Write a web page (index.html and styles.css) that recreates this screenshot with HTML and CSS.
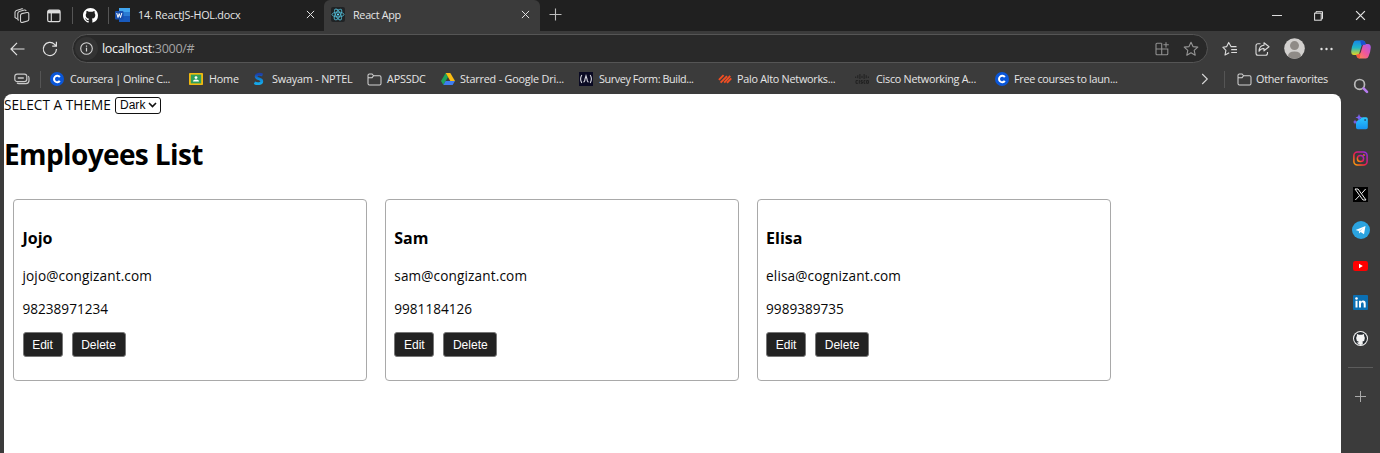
FILE: index.html
```html
<!DOCTYPE html>
<html lang="en">
<head>
<meta charset="utf-8">
<title>React App</title>
<link rel="stylesheet" href="styles.css">
</head>
<body>
<svg class="defs" width="0" height="0" aria-hidden="true">
  <defs>
    <linearGradient id="g-insta" x1="0" y1="1" x2="1" y2="0"><stop offset="0" stop-color="#ffb000"/><stop offset=".45" stop-color="#f5174c"/><stop offset="1" stop-color="#8a2cf0"/></linearGradient>
    <linearGradient id="g-cop1" x1="0" y1="0" x2="0" y2="1"><stop offset="0" stop-color="#1685e8"/><stop offset=".5" stop-color="#22b6c6"/><stop offset="1" stop-color="#e5d51c"/></linearGradient>
    <linearGradient id="g-cop2" x1="1" y1="0" x2="0" y2="1"><stop offset="0" stop-color="#a05cf5"/><stop offset=".5" stop-color="#f0569c"/><stop offset="1" stop-color="#ff9440"/></linearGradient>
    <linearGradient id="g-s" x1="0" y1="0" x2="0" y2="1"><stop offset="0" stop-color="#1e3fa8"/><stop offset=".5" stop-color="#0d86d8"/><stop offset="1" stop-color="#16a8e8"/></linearGradient>
    <linearGradient id="g-bag" x1="0" y1="0" x2="0" y2="1"><stop offset="0" stop-color="#2cc8ff"/><stop offset="1" stop-color="#1693f0"/></linearGradient>
    <symbol id="github" viewBox="0 0 16 16"><path d="M8 0C3.58 0 0 3.58 0 8c0 3.54 2.29 6.53 5.47 7.59.4.07.55-.17.55-.38 0-.19-.01-.82-.01-1.49-2.01.37-2.53-.49-2.69-.94-.09-.23-.48-.94-.82-1.13-.28-.15-.68-.52-.01-.53.63-.01 1.08.58 1.23.82.72 1.21 1.87.87 2.33.66.07-.52.28-.87.51-1.07-1.78-.2-3.64-.89-3.64-3.95 0-.87.31-1.59.82-2.15-.08-.2-.36-1.02.08-2.12 0 0 .67-.21 2.2.82A7.7 7.7 0 0 1 8 3.87c.68 0 1.36.09 2 .26 1.53-1.04 2.2-.82 2.2-.82.44 1.1.16 1.92.08 2.12.51.56.82 1.27.82 2.15 0 3.07-1.87 3.75-3.65 3.95.29.25.54.73.54 1.48 0 1.07-.01 1.93-.01 2.2 0 .21.15.46.55.38A8 8 0 0 0 16 8c0-4.42-3.58-8-8-8z"/></symbol>
    <symbol id="folder" viewBox="0 0 16 14"><path d="M1 11.2V2.5Q1 1 2.5 1H5.4L7 3H13.5Q15 3 15 4.5V11.3Q15 12.8 13.5 12.8H2.5Q1 12.8 1 11.2zM1 5H5.4L7 3" fill="none" stroke="#d4d4d4" stroke-width="1.1"/></symbol>
    <symbol id="coursera" viewBox="0 0 14 14"><circle cx="7" cy="7" r="7" fill="#0a56d8"/><path d="M9.8 5.1A3.2 3.2 0 1 0 9.8 8.9" fill="none" stroke="#fff" stroke-width="2"/></symbol>
    <symbol id="star" viewBox="0 0 16 16"><path d="M8 1.2L10 5.6 14.8 6.1 11.2 9.3 12.2 14.2 8 11.7 3.8 14.2 4.8 9.3 1.2 6.1 6 5.6z" fill="none" stroke="currentColor" stroke-width="1.1" stroke-linejoin="round"/></symbol>
    <symbol id="close" viewBox="0 0 10 10"><path d="M1 1L9 9M9 1L1 9" stroke="#e4e4e4" stroke-width="1.1"/></symbol>
  </defs>
</svg>

<header class="tabstrip">
  <svg class="ic" width="16" height="16" viewBox="0 0 16 16" fill="none" stroke="#d0d0d0" stroke-width="1.1" stroke-linejoin="round"><path d="M7.8 5.6L12.9 4.5Q14.8 4.2 14.8 6V11.2Q14.8 12.6 13.5 13L8.6 14.4Q6.6 14.8 6.5 13V7.6Q6.5 6 7.8 5.6z"/><path d="M4.9 12.2L3.8 11.7V5.4Q4 3.9 5.3 3.5L10.4 2Q11.6 1.8 12.2 3M2.9 10.7L1 9.6V4.4Q1.1 3 2.4 2.5L7.4.9Q8.4.7 9 1"/></svg>
  <svg class="ic" width="14" height="14" viewBox="0 0 14 14"><rect x=".7" y="1.2" width="12.4" height="11.4" rx="1.6" fill="none" stroke="#dedede" stroke-width="1.2"/><path d="M1 1.2H13V4.4H1z" fill="#dedede"/><path d="M4.3 4V12.5" stroke="#dedede" stroke-width="1.1"/></svg>
  <i class="sep"></i>
  <svg class="ic" width="15" height="15" fill="#fff"><use href="#github"/></svg>
  <i class="sep"></i>
  <div class="tab">
    <svg width="15" height="14" viewBox="0 0 15 14"><rect x="4" width="11" height="14" rx="1" fill="#2b7cd3"/><path d="M4 0H15V4H4z" fill="#41a5ee"/><path d="M4 8H15V13Q15 14 14 14H4z" fill="#185abd"/><rect y="3" width="8.5" height="8.5" rx="1" fill="#174fae"/><path d="M1.7 5L3 9.5 4.2 5.6 5.5 9.5 6.8 5" fill="none" stroke="#fff" stroke-width="1"/></svg>
    <span class="tab-title t-doc">14. ReactJS-HOL.docx</span>
    <svg width="9" height="9"><use href="#close"/></svg>
  </div>
  <div class="tab active">
    <svg width="14" height="15" viewBox="0 0 14 15"><rect width="14" height="15" rx="2" fill="#202325"/><g fill="none" stroke="#4fb3cc" stroke-width=".9"><ellipse cx="7" cy="7.5" rx="6" ry="2.4"/><ellipse cx="7" cy="7.5" rx="6" ry="2.4" transform="rotate(60 7 7.5)"/><ellipse cx="7" cy="7.5" rx="6" ry="2.4" transform="rotate(120 7 7.5)"/></g><circle cx="7" cy="7.5" r="1.1" fill="#61dafb"/></svg>
    <span class="tab-title t-app">React App</span>
    <svg width="9" height="9"><use href="#close"/></svg>
  </div>
  <svg class="newtab" width="13" height="13" viewBox="0 0 13 13"><path d="M6.5 .5V12.5M.5 6.5H12.5" stroke="#bdbdbd" stroke-width="1.1"/></svg>
  <div class="window-controls">
    <svg width="10" height="10" viewBox="0 0 10 10"><path d="M0 4.5H10" stroke="#ddd"/></svg>
    <svg width="9" height="10" viewBox="0 0 9 10" fill="none" stroke="#e4e4e4"><rect x=".6" y="2.2" width="6.6" height="7"/><path d="M2 2V.7H8.5V7.8H7.4"/></svg>
    <svg width="11" height="11"><use href="#close"/></svg>
  </div>
</header>

<div class="frame">
  <div class="main">
    <div class="toolbar">
      <svg width="15" height="14" viewBox="0 0 15 14" fill="none" stroke="#e2e2e2" stroke-width="1.2"><path d="M7 .8L1 7L7 13.2M1 7H14.5"/></svg>
      <svg width="16" height="16" viewBox="0 0 16 16" fill="none" stroke="#e2e2e2" stroke-width="1.2"><path d="M14.5 8A6.6 6.6 0 1 1 12.6 3.3L14.2 5M14.4 .8V5.1H10.2"/></svg>
      <div class="omnibox">
        <span class="info"><svg width="13" height="13" viewBox="0 0 13 13"><circle cx="6.5" cy="6.5" r="5.8" fill="none" stroke="#d5d5d5" stroke-width="1.1"/><path d="M6.5 5.7V9.6M6.5 3.4V4.7" stroke="#d5d5d5" stroke-width="1.2"/></svg></span>
        <span class="url"><b>localhost</b>:3000/#</span>
        <svg width="15" height="14" viewBox="0 0 15 14" fill="none" stroke="#909090" stroke-width="1.1"><path d="M6.5 1.2H2Q1 1.2 1 2.2V11.8Q1 12.8 2 12.8H11.8Q12.8 12.8 12.8 11.8V7H1M6.7 1.2V12.8M11 .2V5.4M8.4 2.8H13.8"/></svg>
        <svg class="fav" width="16" height="16"><use href="#star"/></svg>
      </div>
      <svg class="collect" width="16" height="16" viewBox="0 0 16 16" fill="none" stroke="#dcdcdc" stroke-width="1.1" stroke-linejoin="round"><path d="M14.5 5.6H9L6.7 1.4 4.7 5.6.8 6.2 3.9 9.3 3 14 7.2 11.8M9.2 8.6H15M9.2 11.5H15"/></svg>
      <svg class="share" width="15" height="14" viewBox="0 0 15 14" fill="none" stroke="#dcdcdc" stroke-width="1.1" stroke-linejoin="round"><path d="M5.5 1.8H3Q1 1.8 1 3.8V11.2Q1 13.2 3 13.2H10.5Q12.5 13.2 12.5 11.2V10M9 .8L14 4.8 9 8.8V6.5Q5.8 6.2 4 9.3 4.3 3.5 9 3.2z"/></svg>
      <svg class="avatar" width="21" height="21" viewBox="0 0 21 21"><circle cx="10.5" cy="10.5" r="10.3" fill="#d2d0ce"/><circle cx="10.5" cy="7.6" r="4.5" fill="#8f8b87"/><path d="M4 18.2Q4 13.4 10.5 13.4T17 18.2Q14 20.8 10.5 20.8T4 18.2" fill="#8f8b87"/></svg>
      <svg class="more" width="13" height="4" viewBox="0 0 13 4" fill="#e2e2e2"><circle cx="1.5" cy="2" r="1.2"/><circle cx="6.5" cy="2" r="1.2"/><circle cx="11.5" cy="2" r="1.2"/></svg>
    </div>

    <nav class="bookmarks">
      <svg width="16" height="12" viewBox="0 0 16 12" fill="none" stroke="#c9c9c9" stroke-width="1.2"><rect x=".8" y="1.2" width="12" height="7.4" rx="2.4"/><path d="M3.8 5H9.8" stroke-width="1.5"/><path d="M14.3 3.2Q15 4 15 5.5V7.6Q15 10.6 12 10.6H5Q3.6 10.6 3 10"/></svg>
      <i class="sep"></i>
      <svg width="14" height="14"><use href="#coursera"/></svg><span class="tightest">Coursera | Online C...</span>
      <svg width="14" height="12" viewBox="0 0 14 12"><rect width="14" height="12" rx=".8" fill="#f2b90f"/><rect x="1.8" y="1.6" width="10.4" height="8.8" fill="#2f9e5a"/><circle cx="7" cy="4.6" r="1.4" fill="#fff"/><path d="M4 8.6Q4 6.6 7 6.6T10 8.6z" fill="#fff"/></svg><span class="snug">Home</span>
      <svg width="12" height="14" viewBox="0 0 12 14"><path d="M9.6 3C7 1.8 3.1 2 3.1 4.5C3.1 7.1 8.8 6.5 8.8 9.2C8.8 11.8 4.5 12.3 1.4 10.8" fill="none" stroke="url(#g-s)" stroke-width="2.8"/></svg><span class="snug">Swayam - NPTEL</span>
      <svg width="15" height="13"><use href="#folder"/></svg><span class="snug">APSSDC</span>
      <svg width="14" height="12" viewBox="0 0 14 12"><path d="M4.7 0L7 4 2.4 12 0 8z" fill="#1fa35b"/><path d="M4.7 0H9.3L14 8H9.3z" fill="#fbbc12"/><path d="M4.6 8H14L11.6 12H2.4z" fill="#3f7df0"/></svg><span class="snug">Starred - Google Dri...</span>
      <svg width="14" height="14" viewBox="0 0 14 14"><rect width="14" height="14" fill="#0a0a23"/><path d="M2.8 3Q.4 7 2.8 11M11.2 3Q13.6 7 11.2 11M4.6 10.2Q6.2 9.2 6 7L7 3.8 8 7Q7.9 9.2 9.4 10.2" fill="none" stroke="#d8d8e0" stroke-width="1.1"/></svg><span class="tightest">Survey Form: Build...</span>
      <svg width="14" height="10" viewBox="0 0 14 10" fill="none" stroke="#f04e23" stroke-width="1.9"><path d="M.9 5.9L5.6 1.2M2.6 8.6L9 2.2M6.2 8.6L12.2 1.8M9 8.8L13.2 4.4"/></svg><span class="tight">Palo Alto Networks...</span>
      <svg width="14" height="10" viewBox="0 0 14 10" fill="none" stroke="#202020"><path d="M.7 2.5V4M2.8 1.2V4.2M4.9 0V5M7 1.8V4M9.1 0V5M11.2 1.2V4.2M13.3 2.5V4M2.9 6.6H1V9.3H2.9M4.3 6V9.7M7.6 6.6H6V8H7.4V9.3H5.6M10.4 6.6H9V9.3H10.4M11.6 6.6H13.4V9.3H11.6z"/></svg><span class="tight">Cisco Networking A...</span>
      <svg width="14" height="14"><use href="#coursera"/></svg><span class="tighter">Free courses to laun...</span>
      <svg width="8" height="12" viewBox="0 0 8 12"><path d="M1.2 1L6.3 6 1.2 11" fill="none" stroke="#d8d8d8" stroke-width="1.1"/></svg>
      <i class="sep"></i>
      <svg width="15" height="13"><use href="#folder"/></svg><span class="tight">Other favorites</span>
    </nav>

    <main class="page">
      <div class="theme"><label>SELECT A THEME</label><span class="select"><span>Dark</span><svg width="9" height="6" viewBox="0 0 9 6"><path d="M1 1L4.5 4.6 8 1" fill="none" stroke="#111" stroke-width="1.6"/></svg></span></div>
      <h1>Employees List</h1>
      <div class="cards">
        <section class="card"><h3>Jojo</h3><p class="email">jojo@congizant.com</p><p class="phone">98238971234</p><div class="actions"><button>Edit</button><button class="del">Delete</button></div></section>
        <section class="card"><h3>Sam</h3><p class="email">sam@congizant.com</p><p class="phone">9981184126</p><div class="actions"><button>Edit</button><button class="del">Delete</button></div></section>
        <section class="card"><h3>Elisa</h3><p class="email">elisa@cognizant.com</p><p class="phone">9989389735</p><div class="actions"><button>Edit</button><button class="del">Delete</button></div></section>
      </div>
    </main>
  </div>

  <aside class="sidebar">
    <div class="copilot"><svg width="20" height="19" viewBox="0 0 20 19"><path d="M5.2.5H11.5Q13.6.5 14.2 2.6L14.8 4.8H12.4Q10.8 4.8 10.2 6.8L8.3 13.2Q7.6 15 5.8 15H3Q.2 15 .2 11.5 .5 7 2.4 2.8 3.2.5 5.2.5z" fill="url(#g-cop1)"/><path d="M14.8 18.5H8.5Q6.4 18.5 5.8 16.4L5.2 14.2H7.6Q9.2 14.2 9.8 12.2L11.7 5.8Q12.4 4 14.2 4H17Q19.8 4 19.8 7.5 19.5 12 17.6 16.2 16.8 18.5 14.8 18.5z" fill="url(#g-cop2)"/><path d="M9.2.5H11.5Q13.6.5 14.2 2.6L14.8 4.8H12.4Q11 4.8 10.4 6z" fill="#1a50cf"/><path d="M5.4 14.8L8 14.2Q8.8 13.8 9.4 12.8L8.8 18.5Q6.6 18.5 5.8 16.4z" fill="#f8583b"/></svg></div>
    <div><svg width="16" height="16" viewBox="0 0 16 16" fill="none"><circle cx="6.6" cy="6.4" r="4.9" stroke="#b9b9b9" stroke-width="1.7"/><path d="M10.6 10.4L14 13.8" stroke="#b77cf0" stroke-width="2.6" stroke-linecap="round"/></svg></div>
    <div><svg width="16" height="16" viewBox="0 0 16 16"><path d="M3 8.5Q3 7.5 4 7L8.5 3.8Q9 3.3 10 3.3H13.2Q14.8 3.3 14.8 5V13.5Q14.8 15.2 13 15.2H4.8Q3 15.2 3 13.5z" fill="url(#g-bag)"/><circle cx="12.1" cy="6" r="1" fill="#245a86"/><path d="M6 0L7 2.4 9.3 3.5 7 4.5 6 7 5 4.5 2.5 3.5 5 2.4zM2 5.6L2.7 7.2 4.3 8 2.7 8.7 2 10.4 1.3 8.7 0 8 1.3 7.2z" fill="#7b62f2"/></svg></div>
    <div><svg width="15" height="15" viewBox="0 0 15 15" fill="none" stroke="url(#g-insta)" stroke-width="1.5"><rect x=".9" y=".9" width="13.2" height="13.2" rx="3.5"/><circle cx="7.5" cy="7.5" r="3.1"/><circle cx="11.2" cy="3.8" r=".4"/></svg></div>
    <div><svg width="15" height="15" viewBox="0 0 15 15"><rect width="15" height="15" fill="#000"/><path d="M2 2H5L13 13H10zM12.6 2L8.5 6.7M6.5 8.6L2.3 13" fill="none" stroke="#eee"/></svg></div>
    <div><svg width="18" height="18" viewBox="0 0 18 18"><circle cx="9" cy="9" r="9" fill="#2ba3df"/><path d="M3.6 8.9L13.5 5 12 13.2 8.6 11 7.2 12.4 6.8 9.9z" fill="#fff"/><path d="M7 10L11.5 6.7 8 10.6" fill="#a9d8f0"/></svg></div>
    <div><svg width="15" height="10" viewBox="0 0 15 10"><rect width="15" height="10" rx="2.3" fill="#f00"/><path d="M6 2.8V7.2L9.8 5z" fill="#fff"/></svg></div>
    <div><svg width="15" height="15" viewBox="0 0 15 15"><rect width="15" height="15" rx="1" fill="#0a6fb3"/><circle cx="3.5" cy="3.5" r="1.3" fill="#fff"/><path d="M2.5 5.8H4.5V12.5H2.5zM6 5.8H7.9V6.8Q8.6 5.6 10.1 5.6 12.7 5.6 12.7 8.8V12.5H10.7V9.2Q10.7 7.3 9.4 7.3 8 7.3 8 9.2V12.5H6z" fill="#fff"/></svg></div>
    <div><svg width="15" height="15" viewBox="0 0 16 16"><circle cx="8" cy="8" r="8" fill="#f4f4f4"/><circle cx="8" cy="8" r="6.9" fill="#24292e"/><path d="M5.7 14.2V12.1Q3.6 12.5 3 10.9M5.9 11.3Q3.4 10.8 3.4 7.6 3.4 6.3 4.2 5.4 3.9 4.4 4.3 3.3 5.1 3.3 6.3 4.1 8 3.7 9.7 4.1 10.9 3.3 11.7 3.3 12.1 4.4 11.8 5.4 12.6 6.3 12.6 7.6 12.6 10.8 10.1 11.3 10.5 12 10.4 14.3L8 14.9 5.7 14.2z" fill="#f4f4f4"/></svg></div>
    <i class="rule"></i>
    <div class="add"><svg width="11" height="11" viewBox="0 0 11 11"><path d="M5.5 0V11M0 5.5H11" stroke="#aaa"/></svg></div>
  </aside>
</div>
</body>
</html>
```
FILE: styles.css
```css
* { box-sizing: border-box; }
body {
  margin: 0;
  width: 1380px;
  height: 453px;
  overflow: hidden;
  background: #3b3b3b;
  color: #e6e6e6;
  font-family: "Open Sans", "Noto Sans", sans-serif;
}
svg { display: block; flex: none; overflow: visible; }
.defs { position: absolute; }
.sep { display: block; width: 1px; height: 17px; background: #555; }

.tabstrip {
  display: flex;
  align-items: center;
  height: 31px;
  padding-left: 14px;
  background: #202020;
}
.tabstrip > .ic { margin-right: 17px; }
.tabstrip > .ic + .ic { margin-right: 11px; }
.tabstrip > .sep + .ic { margin: 0 10px; }
.tab {
  display: flex;
  align-items: center;
  width: 215px;
  height: 31px;
  padding: 0 9px 2px 6px;
}
.tab.active {
  width: 216px;
  padding: 0 10px 2px 7px;
  border-radius: 6px 6px 0 0;
  background: #3b3b3b;
}
.tab-title { flex: 1; margin-left: 8px; font-size: 10.8px; line-height: 16px; white-space: nowrap; }
.t-doc { letter-spacing: -0.22px; }
.t-app { letter-spacing: -0.3px; }
.newtab { margin: 0 0 2px 9px; }
.window-controls {
  display: flex;
  align-items: center;
  gap: 36px;
  margin-left: auto;
  padding-right: 14px;
}
.window-controls svg:first-child { margin-right: -4px; }
.window-controls svg:last-child { margin-left: -4px; }

.frame { display: flex; height: 422px; }
.main { width: 1341px; display: flex; flex-direction: column; }
.toolbar { display: flex; align-items: center; height: 35px; padding-left: 10px; }
.toolbar > svg + svg { margin-left: 17px; }
.omnibox {
  display: flex;
  align-items: center;
  width: 1136px;
  height: 29px;
  margin-left: 14px;
  padding: 0 8px 0 2px;
  border: 1px solid #555;
  border-radius: 15px;
  background: #292929;
}
.info {
  display: grid;
  place-items: center;
  width: 23px;
  height: 23px;
  border-radius: 50%;
  background: #333;
}
.url { flex: 1; margin-left: 4px; color: #a5a5a5; font-size: 12.6px; line-height: 20px; letter-spacing: -0.33px; }
.url b { color: #f3f3f3; font-weight: 400; }
.fav { margin-left: 13px; color: #959595; }
.toolbar > .collect { margin-left: 14px; }
.toolbar > .avatar { margin-left: 14px; }
.toolbar > .more { margin-left: 15px; }

.bookmarks {
  display: grid;
  grid-template-columns: 26px 10px 20px 119px 20px 44px 19px 95px 20px 54px 19px 119px 20px 119px 19px 118px 21px 119px 19px 187px 23px 13px 19px 81px;
  align-items: center;
  height: 28px;
  padding: 0 0 2px 14px;
  font-size: 10.8px;
  line-height: 16px;
  white-space: nowrap;
}
.snug { letter-spacing: -0.18px; }
.tight { letter-spacing: -0.26px; }
.tighter { letter-spacing: -0.3px; }
.tightest { letter-spacing: -0.4px; }

.page {
  flex: 1;
  margin-left: 4px;
  border-radius: 8px 8px 0 0;
  background: #fff;
  color: #080808;
  font-size: 13.6px;
}
.theme { display: flex; align-items: center; gap: 4px; height: 22px; line-height: 20px; letter-spacing: 0.05px; }
.select {
  display: flex;
  align-items: center;
  justify-content: space-between;
  width: 46px;
  height: 17px;
  padding: 0 3px 0 4px;
  border: 1.5px solid #111;
  border-radius: 3px;
  font-family: "Liberation Sans", sans-serif;
  font-size: 12px;
  line-height: 14px;
}
h1 { margin: 18px 0 25px; color: #000; font-size: 28px; line-height: 40px; font-weight: 700; letter-spacing: -0.62px; }
.cards { display: flex; gap: 17.8px; margin-left: 9px; }
.card {
  width: 354px;
  height: 182px;
  padding: 28px 8px 0 8.5px;
  border: 1px solid #a9a9a9;
  border-radius: 4px;
}
h3, p { margin: 0; line-height: 20px; }
h3 { color: #000; font-size: 16px; }
.email { margin-top: 18px; letter-spacing: 0.13px; }
.phone { margin-top: 13px; }
.actions { display: flex; gap: 9px; margin-top: 13px; }
button {
  width: 40px;
  height: 25px;
  padding: 0;
  border: 1px solid #777;
  border-radius: 3px;
  background: #222;
  color: #fff;
  font-family: "Liberation Sans", sans-serif;
  font-size: 12px;
}
.del { width: 54px; }

.sidebar { width: 39px; }
.sidebar > div { display: grid; place-items: center; height: 36px; }
.sidebar > .copilot { margin-bottom: 1px; }
.rule { display: block; width: 25px; height: 1px; margin: 11px auto 10px 7px; background: #5c5c5c; }
```
